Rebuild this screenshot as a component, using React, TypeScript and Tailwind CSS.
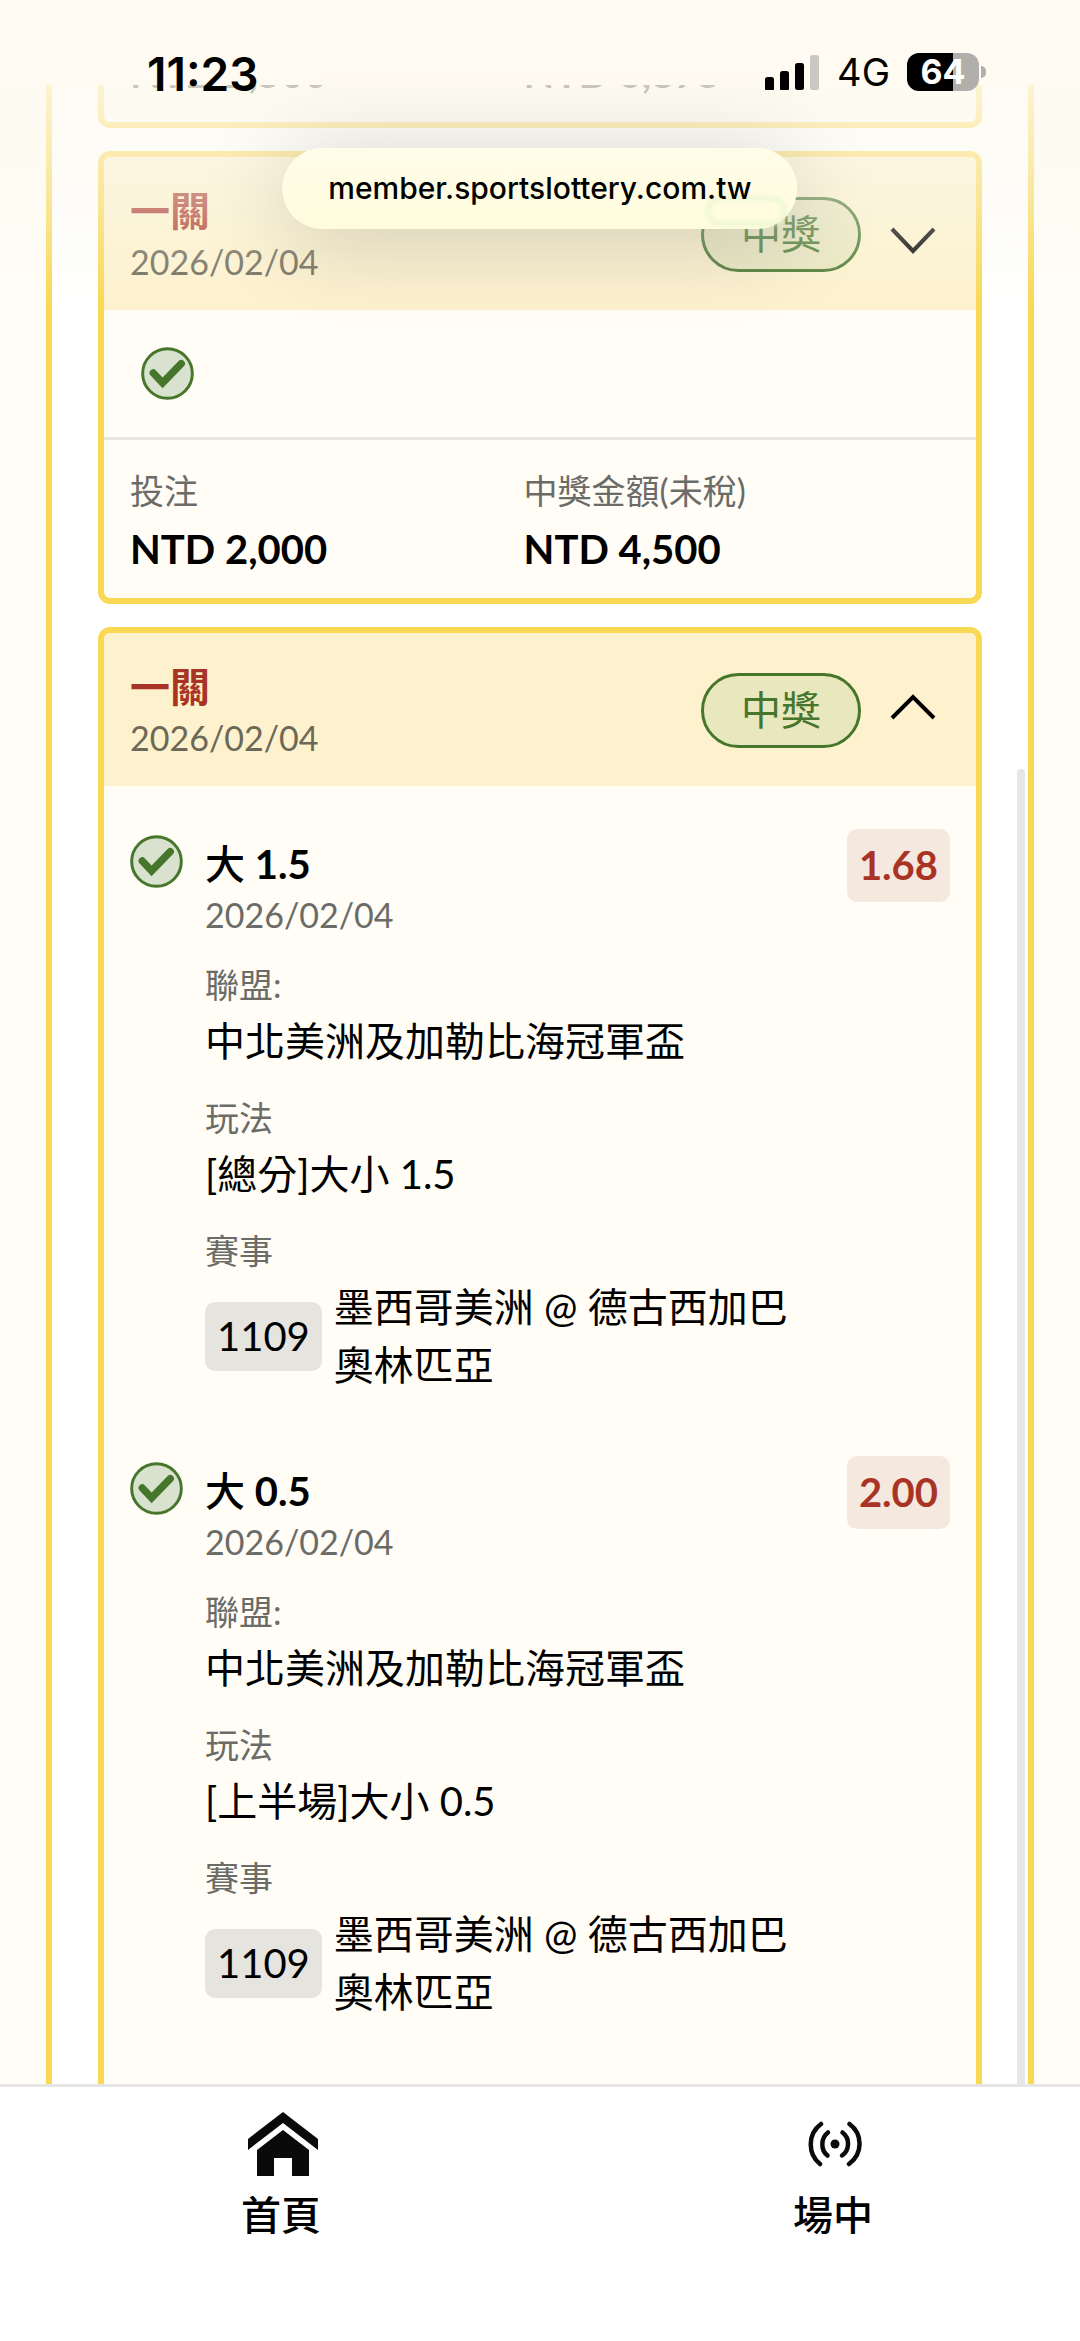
import { ReactNode } from "react";

interface Pick {
  side: string;
  line: string;
  date: string;
  odds: string;
  league: string;
  play: string;
  matchNo: string;
  match: string;
}

const picks: Pick[] = [
  {
    side: "大",
    line: "1.5",
    date: "2026/02/04",
    odds: "1.68",
    league: "中北美洲及加勒比海冠軍盃",
    play: "[總分]大小 1.5",
    matchNo: "1109",
    match: "墨西哥美洲 @ 德古西加巴奧林匹亞",
  },
  {
    side: "大",
    line: "0.5",
    date: "2026/02/04",
    odds: "2.00",
    league: "中北美洲及加勒比海冠軍盃",
    play: "[上半場]大小 0.5",
    matchNo: "1109",
    match: "墨西哥美洲 @ 德古西加巴奧林匹亞",
  },
];

function CheckIcon() {
  return (
    <svg viewBox="0 0 54 54" className="h-[53px] w-[53px] shrink-0">
      <circle
        cx="27"
        cy="27"
        r="25.3"
        fill="#d9e2cf"
        stroke="#46762c"
        strokeWidth="3"
      />
      <path
        d="M12.5 26.5 L22 36.5 L41 17"
        fill="none"
        stroke="#46762c"
        strokeWidth="7.5"
        strokeLinecap="round"
      />
    </svg>
  );
}

function Chevron({ open }: { open: boolean }) {
  return (
    <svg
      viewBox="0 0 46 40"
      className="h-[40px] w-[46px]"
      fill="none"
      stroke="#000"
      strokeWidth="4"
    >
      <path d={open ? "M2 27 L23 6 L44 27" : "M2 14 L23 36 L44 14"} />
    </svg>
  );
}

function HomeIcon() {
  return (
    <svg viewBox="0 0 70 64" className="h-[64px] w-[70px]" fill="#0a0a0a">
      <path d="M35 0 L70 27 V38 L35 11 L0 38 V27 Z" />
      <path d="M35 18 L61 38 V64 H44 V46 H26 V64 H9 V38 Z" />
    </svg>
  );
}

function LiveIcon() {
  return (
    <svg
      viewBox="0 0 54 46"
      className="h-[46px] w-[54px]"
      fill="none"
      stroke="#0a0a0a"
      strokeWidth="4.5"
      strokeLinecap="round"
    >
      <circle cx="27" cy="23" r="4.5" fill="#0a0a0a" stroke="none" />
      <path d="M13 3 C-0.5 13 -0.5 33 12 43" />
      <path d="M20 11.5 C12.500 17 12.500 29 19.500 34.500" />
      <path d="M41.500 3 C55 13 55 33 41 43" />
      <path d="M34.500 11.500 C42 17 42 29 34 34.500" />
    </svg>
  );
}

function StatusBar() {
  return (
    <header className="relative z-20 flex h-[85px] shrink-0 items-start justify-between bg-[#fffbf2] pr-[94px] pl-[147px] font-['Inter',sans-serif]">
      <div className="pt-[48px] text-[46px] leading-[52px] font-semibold">
        11:23
      </div>
      <div className="flex items-center pt-[52px]">
        <svg viewBox="0 0 54 36" className="mr-[18px] h-[36px] w-[54px]">
          <rect x="0" y="23" width="9" height="14" rx="2.5" />
          <rect x="15" y="17" width="9" height="20" rx="2.5" />
          <rect x="30" y="9" width="9" height="27" rx="2.5" />
          <rect x="45" y="1" width="9" height="35" rx="2.5" fill="#c9c8c3" />
        </svg>
        <div className="mr-[17px] text-[38px] leading-[40px]">4G</div>
        <div className="flex h-[38px] w-[72px] items-center justify-center rounded-[12px] bg-linear-to-r from-black from-64% to-[#b0afab] to-64% text-[34px] leading-[38px] font-bold text-white">
          64
        </div>
        <div className="ml-[2px] h-[12px] w-[5px] rounded-r-full bg-[#b0afab]" />
      </div>
    </header>
  );
}

function Amounts({ bet, win }: { bet: string; win: string }) {
  return (
    <dl className="flex px-[26px] pt-[24px] pb-[18px]">
      <div className="w-[48%]">
        <dt className="text-[34px] leading-[54px] text-[#6b6b67]">投注</dt>
        <dd className="text-[40px] leading-[62px] font-bold">{bet}</dd>
      </div>
      <div>
        <dt className="text-[34px] leading-[54px] text-[#6b6b67]">
          中獎金額(未稅)
        </dt>
        <dd className="text-[40px] leading-[62px] font-bold">{win}</dd>
      </div>
    </dl>
  );
}

function BetCard({
  open = false,
  children,
}: {
  open?: boolean;
  children: ReactNode;
}) {
  return (
    <section
      className={`overflow-hidden border-6 border-[#f9d853] bg-[#fffdf6] ${
        open ? "flex-1 rounded-t-[12px] border-b-0" : "rounded-[12px]"
      }`}
    >
      <div className="flex h-[153px] items-center justify-between bg-[#fdf2cd] pt-[2px] pr-[40px] pl-[26px]">
        <div>
          <h2 className="text-[40px] leading-[54px] font-bold text-[#a93425]">
            一關
          </h2>
          <div className="text-[34px] leading-[48px] text-[#6c6857]">
            2026/02/04
          </div>
        </div>
        <div className="flex items-center gap-[29px]">
          <span className="rounded-full border-3 border-[#46762c] bg-[#e9e7be] px-[37px] text-[40px] leading-[69px] text-[#46762c]">
            中獎
          </span>
          <button type="button" aria-label={open ? "收合" : "展開"}>
            <Chevron open={open} />
          </button>
        </div>
      </div>
      {children}
    </section>
  );
}

function Detail({ label, children }: { label: string; children: ReactNode }) {
  return (
    <div>
      <dt className="text-[34px] leading-[54px] text-[#6b6b67]">{label}</dt>
      <dd className="text-[40px] leading-[58px]">{children}</dd>
    </div>
  );
}

function PickRow({ pick }: { pick: Pick }) {
  return (
    <article className="flex items-start">
      <div className="pt-[6px] pr-[22px]">
        <CheckIcon />
      </div>
      <div className="flex-1 pt-[8px]">
        <h3 className="text-[40px] leading-[54px] font-bold">
          <span className="font-medium">{pick.side}</span> {pick.line}
        </h3>
        <div className="text-[34px] leading-[48px] text-[#6b6b67]">
          {pick.date}
        </div>
        <dl className="mt-[19px] flex flex-col gap-[21px]">
          <Detail label="聯盟:">{pick.league}</Detail>
          <Detail label="玩法">{pick.play}</Detail>
          <Detail label="賽事">
            <div className="flex items-center gap-[12px]">
              <span className="rounded-[10px] bg-[#e6e4df] px-[12px] leading-[69px]">
                {pick.matchNo}
              </span>
              <span className="max-w-[470px]">{pick.match}</span>
            </div>
          </Detail>
        </dl>
      </div>
      <span className="rounded-[10px] bg-[#f5e8df] px-[12px] text-[40px] leading-[73px] font-bold text-[#a93425]">
        {pick.odds}
      </span>
    </article>
  );
}

export default function App() {
  return (
    <div className="flex h-screen flex-col overflow-hidden bg-[#fffdf6] font-['Lato','Noto_Sans_CJK_TC',sans-serif] text-black">
      <StatusBar />

      <main className="relative flex min-h-0 flex-1 flex-col overflow-hidden px-[46px]">
        <div className="relative flex min-h-0 flex-1 flex-col gap-[23px] border-x-6 border-[#f9d853] bg-white px-[46px]">
          {/* tail of the card that is scrolled under the status bar */}
          <section className="-mt-[121px] shrink-0 rounded-b-[12px] border-6 border-t-0 border-[#f9d853] bg-[#fffdf6]">
            <Amounts bet="NTD 2,500" win="NTD 6,875" />
          </section>

          <BetCard>
            <div className="border-b-3 border-[#e8e6df] px-[37px] pt-[37px] pb-[37px]">
              <CheckIcon />
            </div>
            <Amounts bet="NTD 2,000" win="NTD 4,500" />
          </BetCard>

          <BetCard open>
            <div className="flex flex-col gap-[62px] px-[26px] pt-[43px]">
              {picks.map((pick) => (
                <PickRow key={pick.line} pick={pick} />
              ))}
            </div>
          </BetCard>

          <div className="absolute top-[684px] right-[3px] bottom-0 w-[8px] rounded-t-full bg-[#e6e6e6]" />
        </div>

        <div className="pointer-events-none absolute inset-x-0 top-0 h-[225px] bg-linear-to-b from-[#fdfaf0]/80 via-[#fbf8ee]/45 to-transparent" />
      </main>

      <div className="absolute top-[148px] left-1/2 z-30 -translate-x-1/2 rounded-full bg-linear-to-b from-[#fffde9] to-[#fffcdd] px-[46px] shadow-[0_12px_90px_rgba(0,0,0,0.18)]">
        {/* refraction of the badge behind the glass */}
        <div className="absolute right-[11px] bottom-[4px] h-[28px] w-[80px] rounded-full border-3 border-[#e3f5cc] blur-[2px]" />
        <div className="relative font-['Inter',sans-serif] text-[30px] leading-[81px] font-medium">
          member.sportslottery.com.tw
        </div>
      </div>

      <nav className="flex h-[257px] shrink-0 items-start justify-between border-t-3 border-[#e6e6e6] bg-white pr-[207px] pl-[241px] text-[40px] leading-[54px] font-medium">
        <a href="#home" className="flex flex-col items-center">
          <span className="flex h-[101px] items-center pt-[12px] pl-[3px]">
            <HomeIcon />
          </span>
          首頁
        </a>
        <a href="#live" className="flex flex-col items-center">
          <span className="flex h-[101px] items-center pt-[12px] pl-[3px]">
            <LiveIcon />
          </span>
          場中
        </a>
      </nav>
    </div>
  );
}
